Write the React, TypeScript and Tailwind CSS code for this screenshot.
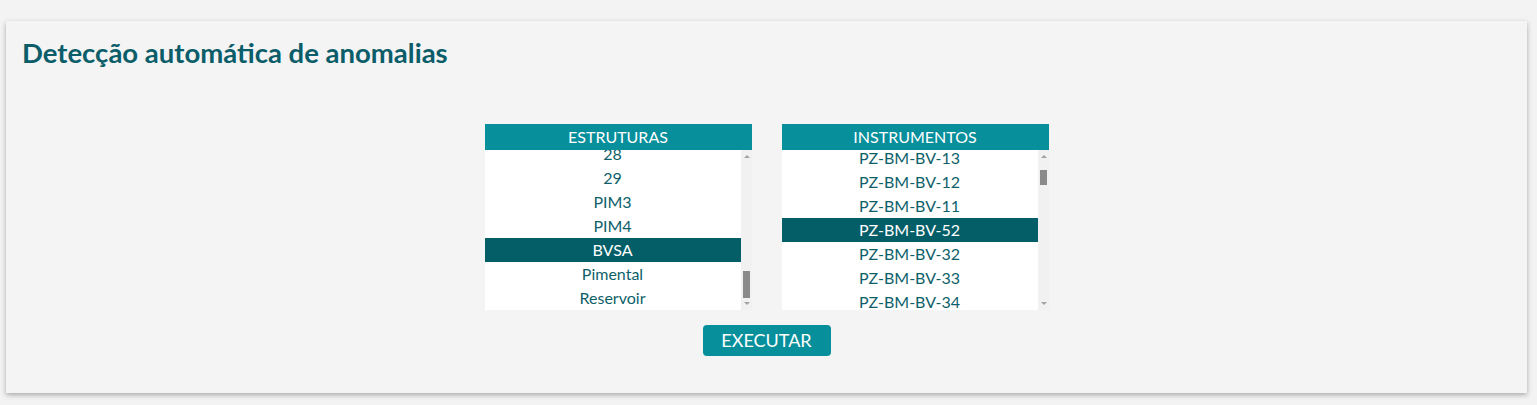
import { useState } from "react";

type ListProps = {
  title: string;
  items: string[];
  selected: string;
  offset: string;
  thumb: string;
};

const estruturas = ["28", "29", "PIM3", "PIM4", "BVSA", "Pimental", "Reservoir"];
const instrumentos = [
  "PZ-BM-BV-13",
  "PZ-BM-BV-12",
  "PZ-BM-BV-11",
  "PZ-BM-BV-52",
  "PZ-BM-BV-32",
  "PZ-BM-BV-33",
  "PZ-BM-BV-34",
];

function ListBox({ title, items, selected, offset, thumb }: ListProps) {
  const [active, setActive] = useState(selected);
  return (
    <div className="w-[267px]">
      <div className="flex h-[26px] items-center justify-center bg-[#078f9b] text-[16px] leading-none text-white">
        {title}
      </div>
      <div className="flex h-[160px]">
        <div className="w-[256px] overflow-hidden bg-white">
          <ul className={offset}>
            {items.map((item) => (
              <li
                key={item}
                onClick={() => setActive(item)}
                className={
                  item === active
                    ? "flex h-[24px] cursor-pointer items-center justify-center bg-[#045e67] text-[16px] text-white"
                    : "flex h-[24px] cursor-pointer items-center justify-center text-[16px] text-[#0e5f6a]"
                }
              >
                {item}
              </li>
            ))}
          </ul>
        </div>
        <div className="relative w-[11px] bg-[#f1f1f1]">
          <div className="absolute left-[3px] top-[5px] h-0 w-0 border-x-[3px] border-b-[3px] border-x-transparent border-b-[#a3a3a3]" />
          <div className={thumb} />
          <div className="absolute bottom-[5px] left-[3px] h-0 w-0 border-x-[3px] border-t-[3px] border-x-transparent border-t-[#a3a3a3]" />
        </div>
      </div>
    </div>
  );
}

export default function App() {
  return (
    <div
      className="min-h-[405px] bg-[#f3f3f3] pb-[12px] pl-[6px] pr-[10px] pt-[21px]"
      style={{ fontFamily: "Lato, 'Open Sans', sans-serif" }}
    >
      <div className="bg-[#f4f4f4] px-[16px] pb-[37px] pt-[16px] shadow-[0_2px_5px_rgba(0,0,0,0.3)]">
        <h1 className="text-[27.5px] font-bold leading-[32px] text-[#0b5d69]">
          Detecção automática de anomalias
        </h1>
        <div className="mt-[55px] flex flex-col items-center">
          <div className="flex gap-[30px]">
            <ListBox
              title="ESTRUTURAS"
              items={estruturas}
              selected="BVSA"
              offset="-mt-[8px]"
              thumb="absolute left-[2px] top-[121px] h-[27px] w-[7px] bg-[#8a8a8a]"
            />
            <ListBox
              title="INSTRUMENTOS"
              items={instrumentos}
              selected="PZ-BM-BV-52"
              offset="-mt-[4px]"
              thumb="absolute left-[2px] top-[20px] h-[15px] w-[7px] bg-[#8a8a8a]"
            />
          </div>
          <button className="mt-[15px] h-[31px] w-[128px] rounded-[4px] bg-[#078f9b] text-[18px] text-white">
            EXECUTAR
          </button>
        </div>
      </div>
    </div>
  );
}
